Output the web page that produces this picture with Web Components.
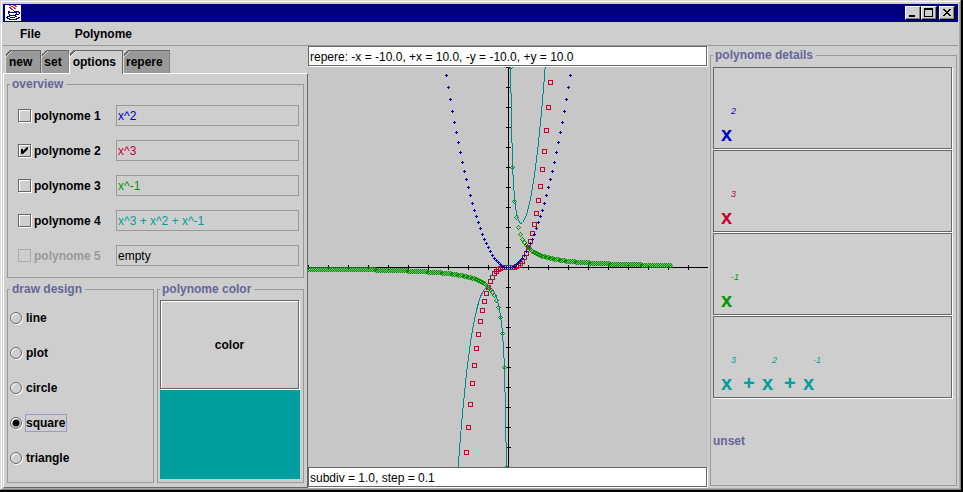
<!DOCTYPE html>
<html lang="en">
<head>
<meta charset="utf-8">
<title>Polynome</title>
<style>
  html { height: 100%; }
  body {
    margin: 0; min-height: 100vh; display: flex; background: #000;
    font: 12px/14px "Liberation Sans", Arial, sans-serif; color: #000;
    --face: #cecece; --line: #999; --dark: #666; --title: #666699;
  }
  app-window { flex: 1; }
</style>
</head>
<body>
<app-window></app-window>

<script>
const define = (name, html, setup) => {
  const t = document.createElement('template');
  t.innerHTML = html;
  customElements.define(name, class extends HTMLElement {
    constructor() {
      super();
      this.attachShadow({ mode: 'open' });
    }
    connectedCallback() {
      if (this.shadowRoot.childNodes.length) return;
      this.shadowRoot.append(t.content.cloneNode(true));
      if (setup) setup(this, this.shadowRoot);
    }
  });
};

/* Group box with a title set into its top border */
define('titled-panel', `
  <style>
    :host { display: flex; min-width: 0; min-height: 0; }
    fieldset { flex: 1; display: flex; flex-direction: column; min-width: 0; margin: 0; padding: 0; border: 1px solid var(--line); box-sizing: border-box; }
    legend { margin-left: 2px; padding: 0 3px 0 2px; font-weight: bold; color: var(--title); line-height: 14px; }
    slot { display: contents; }
  </style>
  <fieldset><legend></legend><slot></slot></fieldset>`,
  (el, r) => { r.querySelector('legend').textContent = el.getAttribute('heading'); });

/* Tick box, label and formula field */
define('poly-row', `
  <style>
    :host { display: grid; grid-template-columns: 98px minmax(0, 1fr); align-items: center; height: 35px; }
    label { display: flex; align-items: center; gap: 3px; font-weight: bold; }
    .box { appearance: none; margin: 0; width: 13px; height: 13px; border: 1px solid var(--dark); box-shadow: 1px 1px #fff, inset 1px 1px #fff; display: grid; box-sizing: border-box; }
    .box:checked::before { content: ""; background: #000; clip-path: polygon(2px 4px, 4px 4px, 4px 6px, 8px 2px, 9px 2px, 9px 4px, 4px 9px, 2px 9px); }
    .box:disabled { border-color: #aaa; box-shadow: none; }
    :host([disabled]) label { color: #999; }
    .formula { font: inherit; height: 21px; width: 100%; box-sizing: border-box; margin: 0; padding: 0 1px; border: 1px solid var(--line); background: none; color: inherit; outline: 0; border-radius: 0; }
  </style>
  <label><input class="box" type="checkbox"><span></span></label>
  <input class="formula" type="text" readonly>`,
  (el, r) => {
    const box = r.querySelector('.box'), f = r.querySelector('.formula');
    r.querySelector('span').textContent = el.getAttribute('label');
    box.checked = el.hasAttribute('checked');
    box.disabled = el.hasAttribute('disabled');
    f.value = el.getAttribute('formula');
    f.setAttribute('aria-label', el.getAttribute('label') + ' formula');
    f.style.color = el.getAttribute('ink');
  });

/* Drawing style radio group */
define('design-choice', `
  <style>
    :host { display: block; padding: 4px 2px; }
    label { display: flex; align-items: center; gap: 3px; height: 35px; font-weight: bold; }
    input { appearance: none; margin: 0; width: 12px; height: 12px; box-sizing: border-box; border: 1px solid var(--dark); border-radius: 50%; box-shadow: 1px 1px #fff, inset 1px 1px #fff; }
    input:checked { background: radial-gradient(circle, #000 3px, transparent 4px); }
    span { border: 1px solid transparent; height: 16px; line-height: 16px; padding-right: 1px; }
    input:checked + span { border-color: #9999cc; }
  </style>`,
  (el, r) => {
    for (const name of ['line', 'plot', 'circle', 'square', 'triangle']) {
      const l = document.createElement('label');
      l.innerHTML = `<input type="radio" name="design"><span>${name}</span>`;
      l.firstChild.checked = name === 'square';
      r.append(l);
    }
  });

define('color-picker', `
  <style>
    :host { flex: 1; display: grid; grid-template-rows: 1fr 1fr; gap: 1px; padding: 4px 3px 3px 2px; }
    button { font: bold 12px/14px "Liberation Sans", Arial, sans-serif; color: #000; margin: 0 1px 0 0; background: var(--face); border: 1px solid var(--dark); box-shadow: 1px 1px #fff, inset 1px 1px #fff; padding: 0; border-radius: 0; }
    div { background: #009e9e; }
  </style>
  <button type="button">color</button><div></div>`);

define('tab-strip', `
  <style>
    :host { display: flex; padding: 4px 0 0 2px; height: 27px; box-sizing: border-box; position: relative; z-index: 1; }
    button {
      font: bold 12px/14px "Liberation Sans", Arial, sans-serif; color: #000; margin: 0; padding: 3px 8px 4px 4px; height: 23px;
      border: 1px solid var(--dark); border-width: 1px 1px 0 0; border-radius: 0;
      background: linear-gradient(135deg, var(--dark) 5px, #ddd 5px, #ddd 6px, #999 6px) border-box;
      clip-path: polygon(5px 0, 100% 0, 100% 100%, 0 100%, 0 5px);
      box-shadow: inset 1px 0 #ddd;
    }
    button + button { padding: 3px 6px 4px 3px; }
    button[aria-selected=true] { height: 24px; margin-bottom: -1px; padding: 3px 6px 5px 4px; background: linear-gradient(135deg, var(--dark) 5px, #fff 5px, #fff 6px, var(--face) 6px) border-box; box-shadow: inset 1px 0 #fff; }
  </style>
  <button role="tab" aria-selected="false">new</button><button role="tab" aria-selected="false">set</button><button role="tab" aria-selected="true">options</button><button role="tab" aria-selected="false">repere</button>`,
  el => el.setAttribute('role', 'tablist'));

define('options-pane', `
  <style>
    :host { display: flex; flex-direction: column; min-width: 0; }
    .body { flex: 1; border: 1px solid #fff; border-color: #fff var(--dark) var(--dark) #fff; padding: 3px; padding-bottom: 4px; display: grid; grid-template-rows: 1fr 1fr; gap: 4px; }
    .low { display: grid; grid-template-columns: 1fr 1fr; gap: 3px; }
    .rows { padding: 7px 4px 3px 10px; }
  </style>
  <tab-strip></tab-strip>
  <div class="body">
    <titled-panel heading="overview"><div class="rows">
      <poly-row label="polynome 1" formula="x^2" ink="#0000c8"></poly-row>
      <poly-row label="polynome 2" formula="x^3" ink="#c80032" checked></poly-row>
      <poly-row label="polynome 3" formula="x^-1" ink="#009600"></poly-row>
      <poly-row label="polynome 4" formula="x^3 + x^2 + x^-1" ink="#009e9e"></poly-row>
      <poly-row label="polynome 5" formula="empty" ink="#000" disabled></poly-row>
    </div></titled-panel>
    <div class="low">
      <titled-panel heading="draw design"><design-choice></design-choice></titled-panel>
      <titled-panel heading="polynome color"><color-picker></color-picker></titled-panel>
    </div>
  </div>`);

define('status-field', `
  <style>
    :host { display: block; height: 21px; padding-right: 1px; }
    input { display: block; font: inherit; color: #000; width: 100%; height: 20px; box-sizing: border-box; margin: 0; padding: 1px 1px 0; background: #fff; border: 1px solid var(--dark); border-radius: 0; box-shadow: 1px 1px #fff; outline: 0; }
  </style>
  <input type="text" readonly>`,
  (el, r) => {
    const i = r.querySelector('input');
    i.value = el.getAttribute('value');
    i.setAttribute('aria-label', el.getAttribute('label'));
  });

/* Graph of the four polynomes, 20 units of drawing per unit of x and y */
define('poly-plot', `
  <style>
    :host { display: block; flex: 1; min-height: 0; background: repeating-conic-gradient(#cacaca 0 25%, #c4c4c4 0 50%) 0 0 / 2px 2px; overflow: hidden; }
    svg { display: block; width: 100%; height: 100%; shape-rendering: crispEdges; }
  </style>
  <svg viewBox="0 0 400 400" fill="none" role="img" aria-label="Graph of the polynomes">
    <path class="axes" stroke="#000"/>
    <path class="cube" stroke="#c80032"/>
    <path class="square" fill="#0000b4"/>
    <path class="core" fill="#30b030" fill-opacity=".45"/>
    <path class="inverse" fill="#009000"/>
    <path class="sum" stroke="#008888"/>
  </svg>`,
  (el, r) => {
    const px = x => 200 + Math.round(x * 20), py = y => 200 - Math.trunc(y * 20);
    const dot = (x, y) => `M${x} ${y}h1v1h-1z`;
    const plus = [[0, -1], [-1, 0], [0, 0], [1, 0], [0, 1]];
    const diamond = [[0, -2], [-1, -1], [1, -1], [-2, 0], [2, 0], [-1, 1], [1, 1], [0, 2]];
    const stamp = (shape, X, Y) => shape.map(([a, b]) => dot(X + a, Y + b)).join('');
    let axes = 'M0 200.5H400M200.5 0V400';
    for (let k = 0; k < 20; k++) {
      axes += `M${k * 20 + .5} 198v5M198 ${k * 20 + .5}h5`;
    }
    let cube = '', square = '', inverse = '', core = '', sum = '', pen = 'M';
    for (let i = -100; i <= 100; i++) {
      const x = i / 10, X = px(x);
      if (Math.abs(x) < 2.15) cube += `M${X - 1.5} ${py(x ** 3) - 1.5}h4v4h-4z`;
      if (Math.abs(x) < 3.15) square += stamp(plus, X, py(x * x));
      if (i === 0) { pen = 'M'; continue; }
      if (x < 8.15) {
        const Y = py(1 / x);
        inverse += stamp(diamond, X, Y);
        if (Math.abs(x) > .95) core += `M${X - 1} ${Y - 2}h3v5h-3z`;
      }
      if (x > -2.65 && x < 2.15) { sum += `${pen}${X + .5} ${py(x ** 3 + x * x + 1 / x) + .5}`; pen = 'L'; }
      if (i === -1) sum += 'V400';
    }
    const set = (c, d) => r.querySelector('.' + c).setAttribute('d', d);
    set('axes', axes); set('cube', cube); set('square', square); set('core', core); set('inverse', inverse); set('sum', sum);
  });

/* One polynome written out with raised exponents */
define('formula-card', `
  <style>
    :host { display: flex; align-items: flex-end; box-sizing: border-box; margin: 0 1px 1px 0; padding: 0 0 4px 7px; border: 1px solid var(--dark); box-shadow: 1px 1px #fff; }
    .term { display: grid; grid-template-columns: 10px 12px 19px; grid-template-rows: 12px 20px; row-gap: 7px; }
    sup { grid-area: 1 / 2; font: italic 9px/12px "Liberation Sans", Arial, sans-serif; white-space: nowrap; }
    b { grid-row: 2; font-size: 20px; line-height: 20px; }
    .x { grid-column: 1; } .plus { grid-column: 3; }
  </style>`,
  (el, r) => {
    el.style.color = el.getAttribute('ink');
    el.getAttribute('powers').split(' ').forEach((p, i, all) => {
      const t = document.createElement('span');
      t.className = 'term';
      t.innerHTML = `<b class="x">x</b><sup>${p}</sup>` + (i < all.length - 1 ? '<b class="plus">+</b>' : '');
      r.append(t);
    });
  });

define('details-pane', `
  <style>
    :host { display: flex; min-width: 0; padding: 2px 1px 2px 2px; }
    titled-panel { flex: 1; }
    .cells { flex: 1; display: grid; grid-template-rows: repeat(5, minmax(0, 1fr)); padding: 5px 3px 3px 2px; }
    .unset { align-self: center; font-weight: bold; color: var(--title); }
  </style>
  <titled-panel heading="polynome details"><div class="cells">
    <formula-card powers="2" ink="#0000c8"></formula-card>
    <formula-card powers="3" ink="#c80032"></formula-card>
    <formula-card powers="-1" ink="#009600"></formula-card>
    <formula-card powers="3 2 -1" ink="#009e9e"></formula-card>
    <div class="unset">unset</div>
  </div></titled-panel>`);

define('title-bar', `
  <style>
    :host { display: flex; align-items: center; height: 18px; background: #000080; padding: 0 3px 0 2px; }
    svg { display: block; shape-rendering: crispEdges; }
    .spacer { flex: 1; }
    button { width: 16px; height: 14px; padding: 0; margin: 0; background: #cecece; border: 1px solid; border-color: #fff #000 #000 #fff; border-radius: 0; box-shadow: inset -1px -1px #808080; }
    .close { margin-left: 2px; }
  </style>
  <svg width="16" height="16" viewBox="0 0 16 16" fill="none">
    <path fill="#fff" d="M0 0h16v16H0z"/>
    <path stroke="#d22" d="M4 .5h2M8 .5h3M6 1.5h2M10 1.5h2M4 2.5h2M8 2.5h2M5 3.5h2M9 3.5h2M6 4.5h2M8 5.5h1"/>
    <path stroke="#000080" d="M3 6.5h2M9 6.5h5M3 7.5h9M13 7.5h2M3 8.5h1M11 8.5h1M14 8.5h1M4 9.5h1M10 9.5h4M4 10.5h7M2 11.5h3M10 11.5h2M1 12.5h2M5 12.5h5M13 12.5h2M2 13.5h3M11 13.5h3M4 14.5h8"/>
  </svg>
  <span class="spacer"></span>
  <button type="button" aria-label="Minimize"><svg width="14" height="12"><path fill="#000" d="M3 8h6v2H3z"/></svg></button>
  <button type="button" aria-label="Maximize"><svg width="14" height="12"><path fill="#000" fill-rule="evenodd" d="M2 1h9v9H2zM3 3h7v6H3z"/></svg></button>
  <button type="button" class="close" aria-label="Close"><svg width="14" height="12"><path fill="#000" d="M3 2h2v1h1v1h2V3h1V2h2v1h-1v1H9v1H8v1h1v1h1v1h1v1H9V8H8V7H6v1H5v1H3V8h1V7h1V6h1V5H5V4H4V3H3z"/></svg></button>`);

define('menu-bar', `
  <style>
    :host { display: flex; align-items: center; gap: 22px; height: 24px; box-sizing: border-box; padding-left: 11px; border-bottom: 1px solid var(--line); }
    button { font: bold 12px/14px "Liberation Sans", Arial, sans-serif; color: #000; background: none; border: 0; margin: 0; padding: 2px 6px; }
  </style>
  <button type="button">File</button><button type="button">Polynome</button>`);

define('app-window', `
  <style>
    :host { display: flex; flex-direction: column; box-sizing: border-box; background: var(--face); margin: 0 2px 2px 0; padding: 3px 2px 1px; border: 1px solid #dadada; border-right-color: #808080; border-bottom-color: #808080; box-shadow: inset 1px 1px #fff, inset -1px -1px #aaa; }
    main { flex: 1; display: grid; grid-template-columns: 305fr 400fr 250fr; min-height: 0; }
    .graph { display: flex; flex-direction: column; min-width: 0; }
  </style>
  <title-bar></title-bar>
  <menu-bar></menu-bar>
  <main>
    <options-pane></options-pane>
    <div class="graph">
      <status-field label="repere" value="repere: -x = -10.0, +x = 10.0, -y = -10.0, +y = 10.0"></status-field>
      <poly-plot></poly-plot>
      <status-field label="subdivision" value="subdiv = 1.0, step = 0.1"></status-field>
    </div>
    <details-pane></details-pane>
  </main>`);
</script>
</body>
</html>
